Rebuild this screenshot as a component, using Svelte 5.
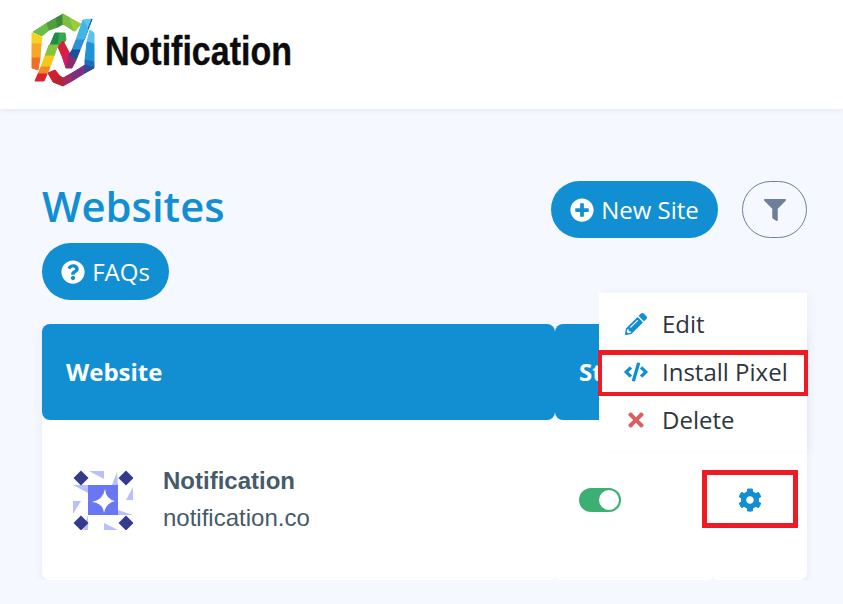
<script>
	const logoBits = [
		// upper green band
		['#6cbd45', '33,32 47,23 49,30 42,36'], ['#4f9f3f', '47,23 56,18 58,27 49,30'], ['#3c8a3a', '56,18 63,14 63,24 58,27'],
		['#7ebf41', '63,14 70,18 74,31 63,24'], ['#9ccb3b', '70,18 81,24 75,31 74,31'],
		// left band
		['#f6d21f', '32,33 42,37 41,44 32,44'], ['#f9a526', '32,44 41,44 40,58 32,58'], ['#ee6f26', '32,58 40,58 38,70 32,68'],
		// N left stem
		['#1e8c4a', '50,45 55,33 60,33 58,45'], ['#39a94a', '60,33 65,33 66,40 60,48 58,45'], ['#86c440', '49,45 58,45 54,56 45,56'],
		['#f6c81e', '45,56 54,56 50,67 41,67'], ['#f08a24', '41,67 50,67 47,74 38,74'], ['#d9252e', '38,74 47,74 44,81 35,81'],
		// N diagonal
		['#d71f3f', '58,47 63,41 69,52 62,56'], ['#e0175f', '62,56 69,52 72,62 66,68'],
		// N right stem
		['#5cc8f0', '83,20 92,19 88,29'], ['#2563ae', '88,29 92,19 84,40'], ['#41b5e8', '83,20 88,29 84,40 76,40'],
		['#2f8fd4', '76,40 84,40 80,50 72,50'], ['#1c4f9c', '72,50 80,50 76,60 69,55'], ['#8e2a6a', '69,55 76,60 72,68 66,68'],
		// right band
		['#5cc3ee', '90,30 94,33 94,44 87,42'], ['#1f93d6', '87,42 94,44 94,62 85,60'], ['#1d6db7', '85,60 94,62 94,68 85,65'],
		// bottom band
		['#cf2030', '48,73 55,70 60,76 53,82'], ['#b8232f', '53,82 60,76 63,78 63,86'], ['#a32a5e', '63,78 72,73 72,81 63,86'],
		['#7c2f82', '72,73 85,65 85,73 72,81'], ['#2d4a9b', '85,65 94,68 85,73']
	];

	const spots = [[81, 478], [126, 478], [81, 523], [126, 523]];

	const shards = [
		'89,471 104,471 104,479',
		'117,472 118,485 112,485',
		'133,487 133,500 126,500',
		'118,510 133,515 118,515',
		'104,523 118,530 104,530',
		'88,515 88,530 83,530',
		'73,501 81,501 73,514',
		'73,485 88,485 88,493'
	];
</script>

<header class="topbar">
	<svg class="logo" viewBox="30 12 66 76" aria-hidden="true">
		{#each logoBits as [fill, points]}
			<polygon {fill} {points} stroke={fill} stroke-width="1" stroke-linejoin="round" />
		{/each}
	</svg>
	<span class="brand">Notification</span>
</header>

<main class="content">
	<div class="heading">
		<h1>Websites</h1>
		<div class="actions">
			<button class="pill">
				<svg viewBox="0 0 512 512" class="pill-icon"><path d="M256 8C119 8 8 119 8 256s111 248 248 248 248-111 248-248S393 8 256 8zm144 276c0 6.6-5.4 12-12 12h-92v92c0 6.6-5.4 12-12 12h-56c-6.6 0-12-5.4-12-12v-92h-92c-6.6 0-12-5.4-12-12v-56c0-6.6 5.4-12 12-12h92v-92c0-6.6 5.4-12 12-12h56c6.6 0 12 5.4 12 12v92h92c6.6 0 12 5.4 12 12v56z" /></svg>
				New Site
			</button>
			<button class="filter" aria-label="Filter">
				<svg viewBox="0 0 512 512"><path d="M487.976 0H24.028C2.71 0-8.047 25.866 7.058 40.971L192 225.941V432c0 7.831 3.821 15.17 10.237 19.662l80 55.98C298.02 518.69 320 507.493 320 487.98V225.941l184.947-184.97C520.021 25.896 509.338 0 487.976 0z" /></svg>
			</button>
		</div>
	</div>

	<button class="pill faq">
		<svg viewBox="0 0 512 512" class="pill-icon"><path d="M504 256c0 136.997-111.043 248-248 248S8 392.997 8 256C8 119.083 119.043 8 256 8s248 111.083 248 248zM262.655 90c-54.497 0-89.255 22.957-116.549 63.758-3.536 5.286-2.353 12.415 2.715 16.258l34.699 26.31c5.205 3.947 12.621 3.008 16.665-2.122 17.864-22.658 30.113-35.797 57.303-35.797 20.429 0 45.698 13.148 45.698 32.958 0 14.976-12.363 22.667-32.534 33.976C247.128 238.528 216 254.941 216 296v4c0 6.627 5.373 12 12 12h56c6.627 0 12-5.373 12-12v-1.333c0-28.462 83.186-29.647 83.186-106.667 0-58.002-60.165-102-116.531-102zM256 338c-25.365 0-46 20.635-46 46 0 25.364 20.635 46 46 46s46-20.636 46-46c0-25.365-20.635-46-46-46z" /></svg>
		FAQs
	</button>

	<section class="table">
		<div class="th">Website</div>
		<div class="th">Status</div>
		<div class="th"></div>

		<div class="td site">
			<svg class="avatar" viewBox="73 470 60 60" aria-hidden="true">
				{#each shards as points}
					<polygon fill="#b9c0fb" {points} />
				{/each}
				{#each spots as [x, y]}
					<polygon fill="#353b8c" points={`${x - 7.5},${y} ${x},${y - 7.5} ${x + 7.5},${y} ${x},${y + 7.5}`} />
				{/each}
				<rect x="88" y="485" width="30" height="30" fill="#6a77f5" />
				<path fill="#fff" d="M105 489Q106 499 115 501Q106 503 104 513Q103 503 92 502Q103 500 105 489z" />
			</svg>
			<div class="names">
				<strong>Notification</strong>
				<span>notification.co</span>
			</div>
		</div>
		<div class="td status">
			<span class="toggle"><span></span></span>
		</div>
		<div class="td gear">
			<svg viewBox="0 0 512 512"><path d="M487.4 315.7l-42.6-24.6c4.3-23.2 4.3-47 0-70.2l42.6-24.6c4.9-2.8 7.1-8.6 5.5-14-11.1-35.6-30-67.8-54.7-94.6-3.8-4.1-10-5.1-14.8-2.3L380.8 110c-17.9-15.4-38.5-27.3-60.8-35.1V25.8c0-5.6-3.9-10.5-9.4-11.7-36.7-8.2-74.3-7.8-109.2 0-5.5 1.2-9.4 6.1-9.4 11.7V75c-22.2 7.9-42.8 19.8-60.8 35.1L88.7 85.5c-4.9-2.8-11-1.9-14.8 2.3-24.7 26.7-43.6 58.9-54.7 94.6-1.7 5.4.6 11.2 5.5 14L67.3 221c-4.3 23.2-4.3 47 0 70.2l-42.6 24.6c-4.9 2.8-7.1 8.6-5.5 14 11.1 35.6 30 67.8 54.7 94.6 3.8 4.1 10 5.1 14.8 2.3l42.6-24.6c17.9 15.4 38.5 27.3 60.8 35.1v49.2c0 5.6 3.9 10.5 9.4 11.7 36.7 8.2 74.3 7.8 109.2 0 5.5-1.2 9.4-6.1 9.4-11.7v-49.2c22.2-7.9 42.8-19.8 60.8-35.1l42.6 24.6c4.9 2.8 11 1.9 14.8-2.3 24.7-26.7 43.6-58.9 54.7-94.6 1.5-5.5-.7-11.3-5.6-14.1zM256 336c-44.1 0-80-35.9-80-80s35.9-80 80-80 80 35.9 80 80-35.9 80-80 80z" /></svg>
			<span class="mark gear-mark"></span>
		</div>

		<div class="menu">
			<div class="item">
				<svg viewBox="0 0 512 512" class="blue"><path d="M497.9 142.1l-46.1 46.1c-4.7 4.7-12.3 4.7-17 0l-111-111c-4.7-4.7-4.7-12.3 0-17l46.1-46.1c18.7-18.7 49.1-18.7 67.9 0l60.1 60.1c18.8 18.7 18.8 49.1 0 67.9zM284.2 99.8L21.6 362.4.4 483.9c-2.9 16.4 11.4 30.6 27.8 27.8l121.5-21.3 262.6-262.6c4.7-4.7 4.7-12.3 0-17l-111-111c-4.8-4.7-12.4-4.7-17.1 0zM124.1 339.9c-5.5-5.5-5.5-14.3 0-19.8l154-154c5.5-5.5 14.3-5.5 19.8 0s5.5 14.3 0 19.8l-154 154c-5.5 5.5-14.3 5.5-19.8 0zM88 424h48v36.3l-64.5 11.3-31.1-31.1L51.7 376H88v48z" /></svg>
				Edit
			</div>
			<div class="item">
				<svg viewBox="0 0 640 512" class="blue"><path d="M278.9 511.5l-61-17.7c-6.4-1.8-10-8.5-8.2-14.9L346.2 8.7c1.8-6.4 8.5-10 14.9-8.2l61 17.7c6.4 1.8 10 8.5 8.2 14.9L293.8 503.3c-1.9 6.4-8.5 10.1-14.9 8.2zm-114-112.2l43.5-46.4c4.6-4.9 4.3-12.7-.8-17.2L117 256l90.6-79.7c5.1-4.5 5.5-12.3.8-17.2l-43.5-46.4c-4.5-4.8-12.1-5.1-17-.5L3.8 247.2c-5.1 4.7-5.1 12.8 0 17.5l144.1 135.1c4.9 4.6 12.5 4.4 17-.5zm327.2.6l144.1-135.1c5.1-4.7 5.1-12.8 0-17.5L492.1 112.1c-4.8-4.5-12.4-4.3-17 .5L431.6 159c-4.6 4.9-4.3 12.7.8 17.2L523 256l-90.6 79.7c-5.1 4.5-5.5 12.3-.8 17.2l43.5 46.4c4.5 4.9 12.1 5.1 17 .6z" /></svg>
				Install Pixel
				<span class="mark pixel-mark"></span>
			</div>
			<div class="item">
				<svg viewBox="0 0 352 512" class="red"><path d="M242.72 256l100.07-100.07c12.28-12.28 12.28-32.19 0-44.48l-22.24-22.24c-12.28-12.28-32.19-12.28-44.48 0L176 189.28 75.93 89.21c-12.28-12.28-32.19-12.28-44.48 0L9.21 111.45c-12.28 12.28-12.28 32.19 0 44.48L109.28 256 9.21 356.07c-12.28 12.28-12.28 32.19 0 44.48l22.24 22.24c12.28 12.28 32.2 12.28 44.48 0L176 322.72l100.07 100.07c12.28 12.28 32.2 12.28 44.48 0l22.24-22.24c12.28-12.28 12.28-32.19 0-44.48L242.72 256z" /></svg>
				Delete
			</div>
		</div>
	</section>
</main>

<style>
	:global(body) {
		background: #f5f8ff;
		font-family: "Open Sans", sans-serif;
		overflow: hidden;
	}

	.topbar {
		display: flex;
		align-items: center;
		height: 109px;
		padding-left: 30px;
		background: #fff;
		box-shadow: 0 1px 6px rgba(60, 70, 110, 0.1);
		box-sizing: border-box;
	}

	.logo {
		width: 66px;
		height: 76px;
		margin-top: -9px;
		flex: none;
	}

	.brand {
		margin: -7px 0 0 9px;
		font-family: "Liberation Sans", sans-serif;
		font-size: 40px;
		font-weight: 700;
		color: #0c0c0c;
		-webkit-text-stroke: 0.4px #0c0c0c;
		transform: scaleX(0.85);
		transform-origin: left center;
	}

	.content {
		padding: 72px 36px 0 42px;
	}

	.heading {
		display: flex;
		justify-content: space-between;
	}

	h1 {
		margin: 0;
		font-size: 41.8px;
		font-weight: 600;
		line-height: 50px;
		color: #128fd2;
	}

	.actions {
		display: flex;
		gap: 24px;
	}

	button {
		font-family: inherit;
		cursor: pointer;
	}

	.pill {
		display: flex;
		align-items: center;
		justify-content: center;
		gap: 7px;
		width: 167px;
		height: 57px;
		padding: 0;
		border: 0;
		border-radius: 29px;
		background: #128fd2;
		color: #fff;
		font-size: 24px;
	}

	.pill-icon {
		width: 24px;
		height: 24px;
		fill: #fff;
	}

	.faq {
		width: 127px;
		margin-top: 5px;
	}

	.filter {
		display: flex;
		align-items: center;
		justify-content: center;
		width: 65px;
		height: 57px;
		padding: 0;
		border: 1px solid #6f7f99;
		border-radius: 29px;
		background: transparent;
	}

	.filter svg {
		width: 22px;
		height: 22px;
		fill: #6f7f99;
	}

	.table {
		position: relative;
		display: grid;
		grid-template-columns: 513px 158px 94px;
		grid-template-rows: 96px 160px;
		margin-top: 24px;
		border-radius: 8px;
		box-shadow: 0 3px 8px rgba(60, 70, 110, 0.08);
	}

	.th {
		display: flex;
		align-items: center;
		padding: 0 0 2px 24px;
		border-radius: 8px;
		background: #128fd2;
		color: #fff;
		font-size: 24px;
		font-weight: 700;
	}

	.td {
		display: flex;
		align-items: center;
		background: #fff;
		border-radius: 0 0 5px 5px;
	}

	.site {
		gap: 30px;
		padding-left: 31px;
		border-bottom-left-radius: 8px;
	}

	.avatar {
		width: 60px;
		height: 60px;
		flex: none;
	}

	.names {
		display: flex;
		flex-direction: column;
		gap: 9px;
		padding-bottom: 2px;
		font-family: "Liberation Sans", Arial, sans-serif;
		font-size: 24px;
		color: #465a69;
	}

	.status {
		padding-left: 24px;
	}

	.toggle {
		display: flex;
		justify-content: flex-end;
		align-items: center;
		width: 42px;
		height: 24px;
		padding: 0 2px;
		box-sizing: border-box;
		border-radius: 12px;
		background: #3eaf72;
	}

	.toggle span {
		width: 20px;
		height: 20px;
		border-radius: 50%;
		background: #fff;
	}

	.gear {
		position: relative;
		justify-content: center;
		padding-right: 21px;
		border-bottom-right-radius: 8px;
	}

	.gear svg {
		width: 24px;
		height: 24px;
		fill: #128fd2;
	}

	.mark {
		position: absolute;
		border: 5px solid #ed1c24;
		pointer-events: none;
	}

	.gear-mark {
		inset: 50px 9px 52px -11px;
	}

	.pixel-mark {
		inset: 2px -1px 0 -1px;
		border-width: 5px 4px 4px;
	}

	.menu {
		position: absolute;
		top: -31px;
		right: 0;
		width: 208px;
		padding: 7px 0;
		background: #fff;
		box-shadow: 4px -1px 8px rgba(60, 70, 110, 0.03);
		color: #2e3540;
		font-size: 24px;
	}

	.item {
		position: relative;
		display: flex;
		align-items: center;
		box-sizing: border-box;
		height: 48px;
		padding: 0 0 2px 63px;
	}

	.item svg {
		position: absolute;
		left: 25px;
		top: 50%;
		transform: translateY(-50%);
		width: 24px;
		height: 22px;
	}

	.blue {
		fill: #128fd2;
	}

	.red {
		fill: #d9605f;
	}
</style>
